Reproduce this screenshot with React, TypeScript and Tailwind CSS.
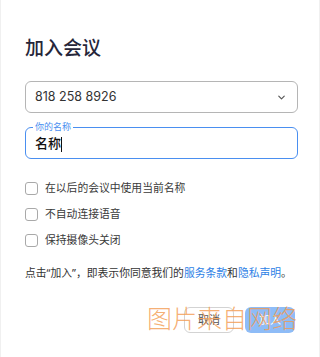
import { ChevronDown } from 'lucide-react';

const font = { fontFamily: '"Noto Sans", "Noto Sans CJK SC", sans-serif' };

function Check({ label }: { label: string }) {
  return (
    <label className="flex items-center gap-[7px] h-[26px]">
      <span className="w-[13px] h-[13px] rounded-[3px] border border-[#a9a9a9] bg-white" />
      <span className="text-[10.8px] text-[#3a3a3a]">{label}</span>
    </label>
  );
}

export default function App() {
  return (
    <div
      className="relative w-[320px] h-[357px] bg-white overflow-hidden border-x border-[#f0f0f0]"
      style={font}
    >
      <div className="px-[24px] pt-[34px]">
        <h1 className="text-[19px] leading-[28px] font-medium text-[#26263a]">加入会议</h1>

        <div className="mt-[19px] h-[32px] w-[273px] rounded-[6px] border border-[#b5b5b5] flex items-center justify-between pl-[9px] pr-[10px]">
          <span className="text-[12.5px] text-[#333]" style={{ fontFamily: '"Inter", "Noto Sans", sans-serif' }}>
            818 258 8926
          </span>
          <ChevronDown size={11} strokeWidth={2.5} className="text-[#555]" />
        </div>

        <div className="relative mt-[14px] h-[32px] w-[273px] rounded-[6px] border border-[#4a8ff0] flex items-center pl-[9px]">
          <span className="absolute -top-[7px] left-[7px] bg-white px-[2px] text-[9px] leading-[12px] text-[#4a8ff0]">
            你的名称
          </span>
          <span className="text-[13px] font-medium text-[#111] mt-[2px]">名称</span>
          <span className="w-px h-[15px] bg-[#111] mt-[2px]" />
        </div>

        <div className="mt-[16px] flex flex-col">
          <Check label="在以后的会议中使用当前名称" />
          <Check label="不自动连接语音" />
          <Check label="保持摄像头关闭" />
        </div>

        <p className="mt-[12px] text-[10.8px] text-[#333] whitespace-nowrap">
          点击“加入”，即表示你同意我们的<span className="text-[#2d7fe6]">服务条款</span>和
          <span className="text-[#2d7fe6]">隐私声明</span>。
        </p>

        <div className="mt-[26px] flex justify-end gap-[11px]">
          <button className="w-[50px] h-[26px] rounded-[6px] border border-[#d3d3d3] bg-white text-[11px] text-[#555]">
            取消
          </button>
          <button className="w-[50px] h-[26px] rounded-[6px] bg-[#8ebcf7] text-[11px] text-white">
            加入
          </button>
        </div>
      </div>

      <div
        className="absolute left-[146px] top-[300px] text-[25px] leading-[34px] text-[#f39a4f]/80 font-light pointer-events-none whitespace-nowrap"
        style={{ fontFamily: '"Noto Sans CJK SC", sans-serif' }}
      >
        图片来自网络
      </div>
    </div>
  );
}
